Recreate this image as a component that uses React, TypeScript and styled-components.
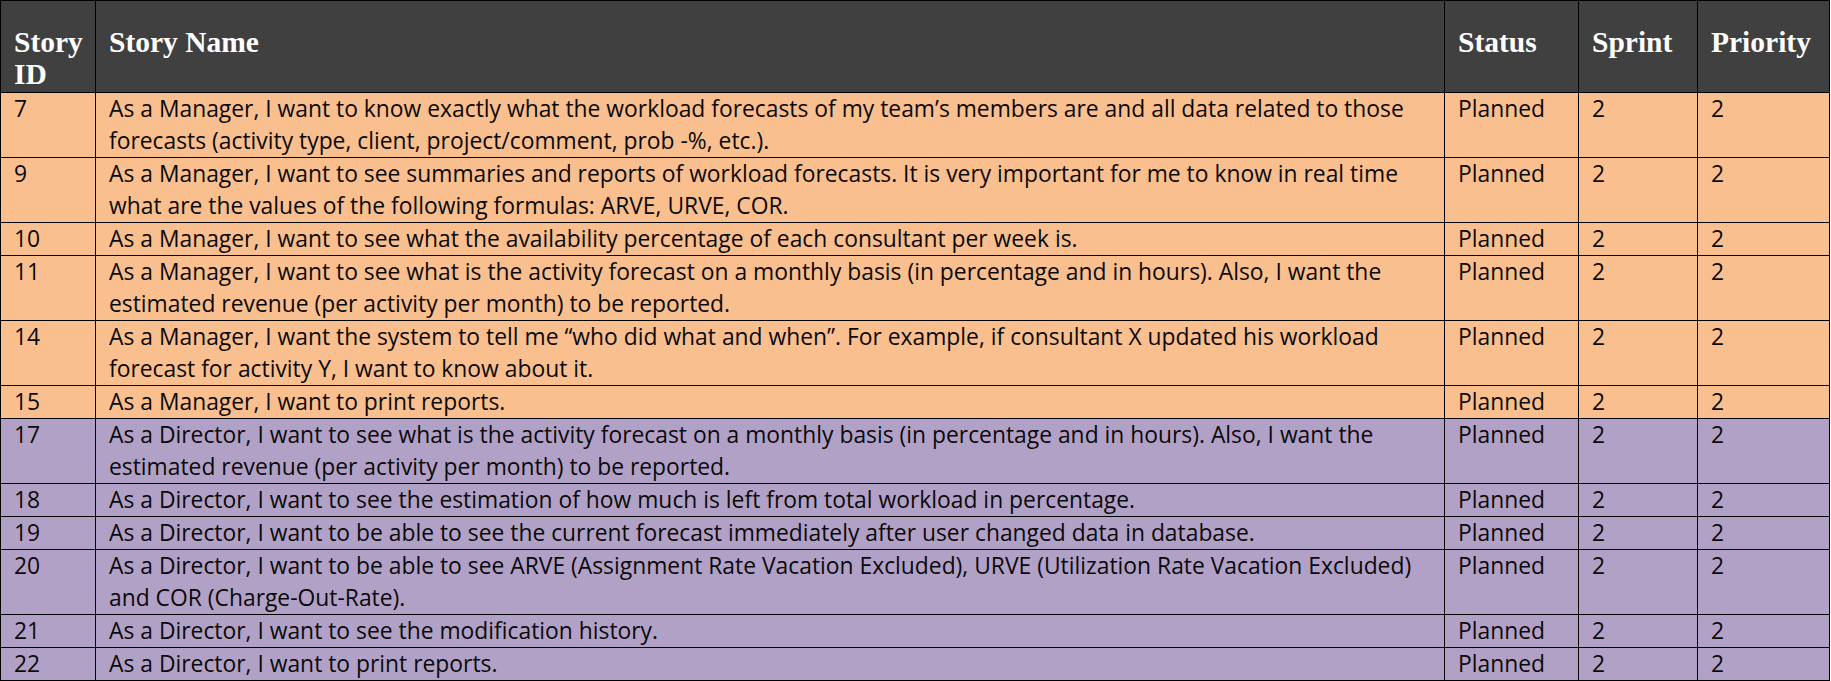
import React from "react";
import styled, { createGlobalStyle } from "styled-components";

const GlobalStyle = createGlobalStyle`
  html, body { margin: 0; padding: 0; background: #ffffff; }
  body { font-family: "Open Sans", "Liberation Sans", sans-serif; }
`;

const ORANGE = "#FABF8F";
const PURPLE = "#B2A1C7";

const Table = styled.div`
  display: flex;
  flex-direction: column;
  gap: 1px;
  width: 1828px;
  padding: 1px;
  background: #000000;
`;

const Row = styled.div<{ $bg: string }>`
  display: grid;
  grid-template-columns: 94px 1348px 133px 118px 131px;
  gap: 1px;
  background: #000000;
  & > div { background: ${(p) => p.$bg}; }
`;

const HeadCell = styled.div`
  padding: 25px 13px 2px 13px;
  font-family: "Liberation Serif", "DejaVu Serif", serif;
  font-weight: 700;
  font-size: 29.5px;
  line-height: 32px;
  color: #ffffff;
  white-space: pre;
  overflow: hidden;
`;

const Cell = styled.div`
  padding: 0 0 0 13px;
  font-family: "Open Sans", "Liberation Sans", sans-serif;
  font-size: 22.85px;
  line-height: 32px;
  color: #0a0a0a;
  white-space: pre;
  overflow: hidden;
`;

type Story = { id: string; text: string; group: "manager" | "director" };

const stories: Story[] = [
  {
    id: "7",
    group: "manager",
    text:
      "As a Manager, I want to know exactly what the workload forecasts of my team\u2019s members are and all data related to those\nforecasts (activity type, client, project/comment, prob -%, etc.).",
  },
  {
    id: "9",
    group: "manager",
    text:
      "As a Manager, I want to see summaries and reports of workload forecasts. It is very important for me to know in real time\nwhat are the values of the following formulas: ARVE, URVE, COR.",
  },
  {
    id: "10",
    group: "manager",
    text: "As a Manager, I want to see what the availability percentage of each consultant per week is.",
  },
  {
    id: "11",
    group: "manager",
    text:
      "As a Manager, I want to see what is the activity forecast on a monthly basis (in percentage and in hours). Also, I want the\nestimated revenue (per activity per month) to be reported.",
  },
  {
    id: "14",
    group: "manager",
    text:
      "As a Manager, I want the system to tell me \u201cwho did what and when\u201d. For example, if consultant X updated his workload\nforecast for activity Y, I want to know about it.",
  },
  { id: "15", group: "manager", text: "As a Manager, I want to print reports." },
  {
    id: "17",
    group: "director",
    text:
      "As a Director, I want to see what is the activity forecast on a monthly basis (in percentage and in hours). Also, I want the\nestimated revenue (per activity per month) to be reported.",
  },
  {
    id: "18",
    group: "director",
    text: "As a Director, I want to see the estimation of how much is left from total workload in percentage.",
  },
  {
    id: "19",
    group: "director",
    text: "As a Director, I want to be able to see the current forecast immediately after user changed data in database.",
  },
  {
    id: "20",
    group: "director",
    text:
      "As a Director, I want to be able to see ARVE (Assignment Rate Vacation Excluded), URVE (Utilization Rate Vacation Excluded)\nand COR (Charge-Out-Rate).",
  },
  { id: "21", group: "director", text: "As a Director, I want to see the modification history." },
  { id: "22", group: "director", text: "As a Director, I want to print reports." },
];

const headers = ["Story\nID", "Story Name", "Status", "Sprint", "Priority"];

export default function App() {
  return (
    <>
      <GlobalStyle />
      <Table>
        <Row $bg="#404040">
          {headers.map((h) => (
            <HeadCell key={h}>{h}</HeadCell>
          ))}
        </Row>
        {stories.map((s) => (
          <Row key={s.id} $bg={s.group === "manager" ? ORANGE : PURPLE}>
            <Cell>{s.id}</Cell>
            <Cell>{s.text}</Cell>
            <Cell>Planned</Cell>
            <Cell>2</Cell>
            <Cell>2</Cell>
          </Row>
        ))}
      </Table>
    </>
  );
}
